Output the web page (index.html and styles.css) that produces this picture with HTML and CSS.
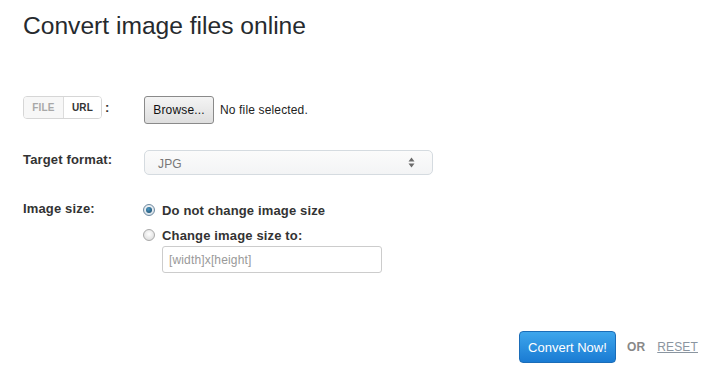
FILE: index.html
```html
<!DOCTYPE html>
<html>
<head>
<meta charset="utf-8">
<link rel="stylesheet" href="styles.css">
</head>
<body>
<div class="page">
  <h1 class="title">Convert image files online</h1>
  <div class="form">
    <div class="label label-toggle">
      <div class="toggle">
        <span class="tab tab-off">FILE</span><span class="tab tab-on">URL</span>
      </div>
      <span class="colon">:</span>
    </div>
    <div class="field field-file">
      <span class="browse">Browse...</span>
      <span class="nofile">No file selected.</span>
    </div>

    <div class="label label-format">Target format:</div>
    <div class="field field-format">
      <div class="select">
        <span class="select-value">JPG</span>
        <svg class="select-arrows" width="7" height="11" viewBox="0 0 7 11"><path d="M3.5 0.5 L6.5 4.5 L0.5 4.5 Z" fill="#6b6b6b"/><path d="M3.5 10.5 L6.5 6.5 L0.5 6.5 Z" fill="#6b6b6b"/></svg>
      </div>
    </div>

    <div class="label label-size">Image size:</div>
    <div class="field field-size">
      <div class="radio-row">
        <span class="radio radio-on"><span class="dot"></span></span>
        <span class="radio-text">Do not change image size</span>
      </div>
      <div class="radio-row">
        <span class="radio"></span>
        <span class="radio-text">Change image size to:</span>
      </div>
      <div class="size-input">[width]x[height]</div>
    </div>
  </div>
  <div class="actions">
    <span class="convert">Convert Now!</span>
    <span class="or">OR</span>
    <span class="reset">RESET</span>
  </div>
</div>
</body>
</html>
```

FILE: styles.css
```css
html, body {
  margin: 0;
  padding: 0;
  background: #ffffff;
}
body {
  font-family: "Liberation Sans", Arial, sans-serif;
  color: #333333;
  width: 719px;
  height: 371px;
  overflow: hidden;
  letter-spacing: 0.15px;
}
.page {
  padding: 0 21px 0 23px;
}
.title {
  margin: 0;
  padding-top: 12px;
  font-size: 24.6px;
  line-height: 28px;
  font-weight: normal;
  letter-spacing: 0;
  color: #262a2e;
}
.form {
  margin-top: 56px;
  display: grid;
  grid-template-columns: 121px 1fr;
  row-gap: 0;
}
.label {
  font-size: 13px;
  font-weight: bold;
  color: #333333;
}
.label-toggle {
  display: flex;
  align-items: center;
  height: 22px;
}
.toggle {
  display: flex;
  border: 1px solid #d6d6d6;
  border-radius: 4px;
  height: 21px;
  overflow: hidden;
}
.tab {
  display: flex;
  align-items: center;
  justify-content: center;
  font-size: 10px;
  font-weight: bold;
}
.tab-off {
  width: 39px;
  color: #a8a8a8;
  background: #f7f7f7;
  border-right: 1px solid #dcdcdc;
}
.tab-on {
  width: 37px;
  color: #333333;
  background: #ffffff;
}
.colon {
  margin-left: 3px;
  font-size: 13px;
}
.field-file {
  display: flex;
  align-items: center;
  height: 28px;
}
.browse {
  box-sizing: border-box;
  width: 70px;
  height: 28px;
  display: flex;
  align-items: center;
  justify-content: center;
  font-size: 12px;
  color: #111111;
  border: 1px solid #8a8a8a;
  border-radius: 3px;
  background: linear-gradient(#f4f4f4, #dedede);
}
.nofile {
  margin-left: 6px;
  font-size: 12px;
  color: #222222;
}
.label-format {
  margin-top: 26px;
  padding-top: 2px;
}
.field-format {
  margin-top: 26px;
}
.select {
  box-sizing: border-box;
  width: 289px;
  height: 25px;
  border: 1px solid #d5dbe0;
  border-radius: 5px;
  background: linear-gradient(#fbfbfb, #f3f4f5);
  display: flex;
  align-items: center;
  justify-content: space-between;
  padding: 0 17px 0 13px;
}
.select-value {
  font-size: 12px;
  color: #777777;
  padding-top: 2px;
}
.select-arrows {
  display: block;
}
.label-size {
  margin-top: 26px;
}
.field-size {
  margin-top: 25px;
  display: flex;
  flex-direction: column;
  align-items: flex-start;
}
.radio-row {
  display: flex;
  align-items: center;
  height: 20px;
  margin-bottom: 5px;
}
.radio {
  box-sizing: border-box;
  width: 12px;
  height: 12px;
  border-radius: 50%;
  border: 1px solid #a9a9a9;
  background: radial-gradient(circle at 50% 40%, #ffffff, #d6d6d6);
  margin-left: -1px;
  display: flex;
  align-items: center;
  justify-content: center;
}
.radio-on {
  border-color: #6f8aa0;
  background: radial-gradient(circle at 50% 40%, #ffffff, #c9d6e0);
}
.dot {
  width: 6px;
  height: 6px;
  border-radius: 50%;
  background: radial-gradient(circle at 40% 35%, #4d98c4, #12415f);
}
.radio-text {
  margin-left: 7px;
  font-size: 13px;
  font-weight: bold;
  color: #333333;
}
.size-input {
  box-sizing: border-box;
  margin-left: 18px;
  margin-top: -4px;
  width: 220px;
  height: 27px;
  border: 1px solid #cccccc;
  border-radius: 3px;
  font-size: 12px;
  color: #999999;
  display: flex;
  align-items: center;
  padding-left: 6px;
}
.actions {
  margin-top: 58px;
  display: flex;
  justify-content: flex-end;
  align-items: center;
}
.convert {
  box-sizing: border-box;
  width: 97px;
  height: 32px;
  display: flex;
  align-items: center;
  justify-content: center;
  font-size: 13px;
  letter-spacing: 0;
  color: #ffffff;
  border: 1px solid #1b6db8;
  border-radius: 4px;
  background: linear-gradient(#3ea6ec, #1a7bd3);
}
.or {
  margin-left: 11px;
  font-size: 12px;
  font-weight: bold;
  color: #888888;
}
.reset {
  margin-left: 12px;
  font-size: 12px;
  color: #8a95a0;
  text-decoration: underline;
}
```
